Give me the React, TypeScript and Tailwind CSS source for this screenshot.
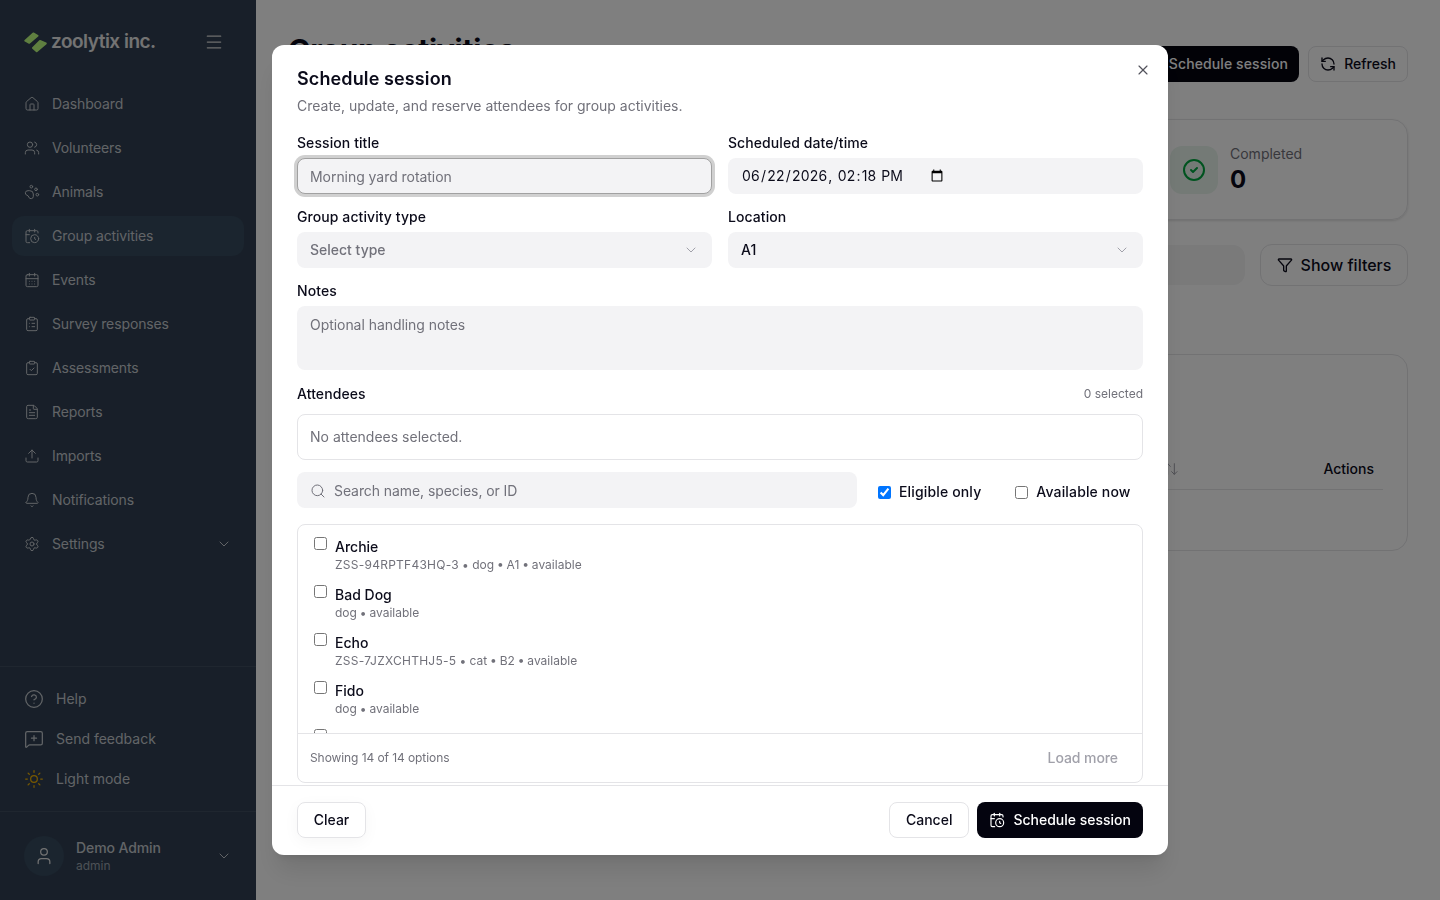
import {
  ArrowUpDown,
  Bell,
  CalendarClock,
  CalendarDays,
  ChevronDown,
  CircleCheck,
  CircleHelp,
  ClipboardCheck,
  ClipboardList,
  FileText,
  Funnel,
  House,
  Menu,
  MessageSquarePlus,
  PawPrint,
  RefreshCcw,
  Search,
  Settings,
  Sun,
  Upload,
  User,
  Users,
  X,
} from "lucide-react";

const nav = [
  { label: "Dashboard", icon: House },
  { label: "Volunteers", icon: Users },
  { label: "Animals", icon: PawPrint },
  { label: "Group activities", icon: CalendarClock, active: true },
  { label: "Events", icon: CalendarDays },
  { label: "Survey responses", icon: ClipboardList },
  { label: "Assessments", icon: ClipboardCheck },
  { label: "Reports", icon: FileText },
  { label: "Imports", icon: Upload },
  { label: "Notifications", icon: Bell },
  { label: "Settings", icon: Settings, chevron: true },
];

const animals = [
  { name: "Archie", id: "ZSS-94RPTF43HQ-3", meta: "dog • A1 • available" },
  { name: "Bad Dog", meta: "dog • available" },
  { name: "Echo", id: "ZSS-7JZXCHTHJ5-5", meta: "cat • B2 • available" },
  { name: "Fido", meta: "dog • available" },
];

function Logo() {
  return (
    <svg width="24" height="22" viewBox="0 0 24 22" className="shrink-0">
      <polygon points="1.3,9.7 9.3,2.4 13.5,4.8 5.3,11.8" fill="#bfff80" stroke="#bfff80" strokeWidth="2" strokeLinejoin="round" />
      <polygon points="9,17 16,10 21.8,12.4 12.7,20.2" fill="#bfff80" stroke="#bfff80" strokeWidth="2" strokeLinejoin="round" />
    </svg>
  );
}

function Sidebar() {
  return (
    <aside className="flex h-full w-64 shrink-0 flex-col bg-[#303f52] text-[#c4c9ce]">
      <div className="flex h-[84px] items-center justify-between pl-6 pr-[32px]">
        <div className="flex items-center gap-[3px]">
          <Logo />
          <span className="text-[19px] font-semibold tracking-[-0.5px] text-[#e6e6e6]">zoolytix inc.</span>
        </div>
        <Menu className="h-5 w-5 text-[#dcdcdc]" strokeWidth={1.5} />
      </div>
      <nav className="flex flex-1 flex-col gap-1 px-3">
        {nav.map((item) => {
          const Icon = item.icon;
          return (
            <div
              key={item.label}
              className={`flex h-10 items-center gap-3 rounded-xl px-3 text-sm tracking-[-0.12px] ${item.active ? "bg-[#364a5e]" : ""}`}
            >
              <Icon className="h-4 w-4 shrink-0" strokeWidth={1.5} />
              <span className="flex-1">{item.label}</span>
              {item.chevron && <ChevronDown className="h-4 w-4 shrink-0" strokeWidth={1.5} />}
            </div>
          );
        })}
      </nav>
      <div className="flex flex-col border-t border-[#3f4c5e] px-6 pb-3 pt-3">
        <div className="flex h-10 items-center gap-3 text-sm">
          <CircleHelp className="h-5 w-5" strokeWidth={1.5} />
          Help
        </div>
        <div className="flex h-10 items-center gap-3 text-sm">
          <MessageSquarePlus className="h-5 w-5" strokeWidth={1.5} />
          Send feedback
        </div>
        <div className="flex h-10 items-center gap-3 text-sm">
          <Sun className="h-5 w-5 text-[#f0b100]" strokeWidth={1.5} />
          Light mode
        </div>
      </div>
      <div className="flex h-[89px] items-center gap-3 border-t border-[#3f4c5e] px-6">
        <div className="flex h-10 w-10 items-center justify-center rounded-full bg-[#364a5e]">
          <User className="h-5 w-5 text-[#e6e6e6]" strokeWidth={1.5} />
        </div>
        <div className="flex-1">
          <div className="text-sm font-medium leading-5 tracking-[-0.1px]">Demo Admin</div>
          <div className="text-xs leading-4 text-[#9aa3ad]">admin</div>
        </div>
        <ChevronDown className="h-4 w-4" strokeWidth={1.5} />
      </div>
    </aside>
  );
}

function PageBehind() {
  return (
    <main className="flex-1 px-8 pt-8 text-[#0b0b1a]">
      <div className="flex items-start justify-between">
        <h1 className="text-3xl font-bold leading-9 tracking-[-0.25px]">Group activities</h1>
        <div className="mt-3.5 flex items-center gap-[9px]">
          <button className="flex h-9 items-center gap-2 rounded-lg bg-[#04040f] pl-3 pr-[11px] text-sm font-medium tracking-[0.1px] text-white">
            <CalendarClock className="h-4 w-4" />
            Schedule session
          </button>
          <button className="flex h-9 w-[100px] items-center justify-center gap-2 rounded-lg border border-[#e4e4e7] text-sm font-medium">
            <RefreshCcw className="h-4 w-4" />
            Refresh
          </button>
        </div>
      </div>
      <div className="mt-[37px] grid grid-cols-4 gap-4">
        <div className="col-span-3" />
        <div className="flex h-[101px] items-center gap-3 rounded-2xl border border-[#e4e4e7] pl-[29px] shadow-sm">
          <div className="flex h-12 w-12 items-center justify-center rounded-xl bg-[#e8f5ec]">
            <CircleCheck className="h-6 w-6 text-[#00a63e]" />
          </div>
          <div className="pb-0.5">
            <div className="mb-0.5 text-sm leading-5 text-[#71717a]">Completed</div>
            <div className="text-2xl font-bold leading-7">0</div>
          </div>
        </div>
      </div>
      <div className="mt-6 flex items-center gap-[15px]">
        <div className="h-10 flex-1 rounded-xl bg-[#f4f4f5]" />
        <button className="flex h-[42px] w-[148px] items-center justify-center gap-2 rounded-xl border border-[#e4e4e7] text-base font-medium">
          <Funnel className="h-4 w-4" />
          Show filters
        </button>
      </div>
      <div className="mt-[68px] h-[197px] rounded-2xl border border-[#e4e4e7] px-6 pt-[104px]">
        <div className="flex items-center justify-between border-b border-[#e4e4e7] pb-2.5 pl-[850px] text-sm font-medium">
          <ArrowUpDown className="h-4 w-4 text-[#a1a1aa]" strokeWidth={1.5} />
          <span className="pr-[9px]">Actions</span>
        </div>
      </div>
    </main>
  );
}

function Label({ children }: { children: React.ReactNode }) {
  return <label className="block text-sm font-medium leading-none tracking-[0.08px] text-[#0b0b1a]">{children}</label>;
}

function FakeSelect({ value, placeholder }: { value: string; placeholder?: boolean }) {
  return (
    <button className="flex h-9 w-full items-center justify-between rounded-lg bg-[#f3f3f5] pl-[13px] pr-[13px] text-sm font-medium">
      <span className={placeholder ? "text-[#71717a]" : "text-[#0b0b1a]"}>{value}</span>
      <ChevronDown className="h-4 w-4 text-[#a1a1aa]" strokeWidth={1.5} />
    </button>
  );
}

function Dialog() {
  return (
    <div className="fixed inset-0 z-50 flex items-center justify-center bg-black/50">
      <div className="relative flex h-[810px] w-[896px] flex-col overflow-hidden rounded-xl bg-white shadow-xl">
        <button className="absolute right-[17px] top-[17px] text-[#52525b]">
          <X className="h-4 w-4" strokeWidth={1.75} />
        </button>
        <div className="flex-1 overflow-hidden px-[25px] pt-5">
          <h2 className="text-lg font-semibold leading-7 tracking-[0.12px] text-[#0b0b1a]">Schedule session</h2>
          <p className="mt-[3px] text-sm leading-5 text-[#71717a]">Create, update, and reserve attendees for group activities.</p>
          <div className="mt-5 grid grid-cols-2 gap-x-4 gap-y-4">
            <div className="flex flex-col gap-2">
              <Label>Session title</Label>
              <input
                placeholder="Morning yard rotation"
                className="h-9 w-full rounded-lg border border-[#a1a1a1] bg-[#f3f3f5] px-3 text-sm tracking-[-0.05px] outline-none ring-[3px] ring-[#d0d0d0] placeholder:text-[#71717a]"
              />
            </div>
            <div className="flex flex-col gap-2">
              <Label>Scheduled date/time</Label>
              <div className="flex h-9 items-center rounded-lg bg-[#f3f3f5] pl-[13px]">
                <input
                  type="datetime-local"
                  defaultValue="2026-06-22T14:18"
                  className="w-[205px] bg-transparent text-sm tracking-[0.2px] text-[#0b0b1a] outline-none"
                />
              </div>
            </div>
            <div className="flex flex-col gap-2">
              <Label>Group activity type</Label>
              <FakeSelect value="Select type" placeholder />
            </div>
            <div className="flex flex-col gap-2">
              <Label>Location</Label>
              <FakeSelect value="A1" />
            </div>
            <div className="col-span-2 flex flex-col gap-2">
              <Label>Notes</Label>
              <textarea
                placeholder="Optional handling notes"
                className="h-16 w-full resize-none rounded-lg bg-[#f3f3f5] px-[13px] py-[9px] text-sm tracking-[-0.05px] outline-none placeholder:text-[#71717a]"
              />
            </div>
          </div>
          <div className="mt-[17px] flex items-center justify-between">
            <Label>Attendees</Label>
            <span className="text-xs leading-none text-[#71717a]">0 selected</span>
          </div>
          <div className="mt-[13px] flex h-[46px] items-center rounded-lg border border-[#e4e4e7] px-3 text-sm text-[#71717a]">
            No attendees selected.
          </div>
          <div className="mt-3 flex items-center">
            <div className="flex h-9 w-[560px] items-center gap-2 rounded-lg bg-[#f3f3f5] pl-[13px] pt-0.5 text-sm tracking-[-0.08px] text-[#71717a]">
              <Search className="h-4 w-4 shrink-0" strokeWidth={1.5} />
              Search name, species, or ID
            </div>
            <label className="ml-[21px] mt-1 flex items-center gap-2 text-sm font-medium tracking-[0.15px] text-[#0b0b1a]">
              <input type="checkbox" defaultChecked className="m-0" />
              Eligible only
            </label>
            <label className="ml-[34px] mt-1 flex items-center gap-2 text-sm font-medium tracking-[0.15px] text-[#0b0b1a]">
              <input type="checkbox" className="m-0" />
              Available now
            </label>
          </div>
          <div className="mt-4 flex h-[259px] flex-col overflow-hidden rounded-lg border border-[#e4e4e7]">
            <div className="flex-1 overflow-hidden px-4 pt-3">
              {animals.map((a) => (
                <label key={a.name} className="flex h-12 items-start gap-2">
                  <input type="checkbox" className="m-0 shrink-0" />
                  <span className="block">
                    <span className="block text-sm font-medium leading-5 text-[#0b0b1a]">{a.name}</span>
                    <span className="block text-xs leading-4 text-[#71717a] [word-spacing:-0.5px]">
                      {a.id && <span className="tracking-[0.25px]">{a.id} • </span>}
                      {a.meta}
                    </span>
                  </span>
                </label>
              ))}
              <input type="checkbox" className="m-0 block" />
            </div>
            <div className="flex h-[49px] shrink-0 items-center justify-between border-t border-[#e4e4e7] pl-3 pr-6 text-xs tracking-[-0.08px] text-[#71717a]">
              Showing 14 of 14 options
              <span className="text-sm font-medium text-[#a1a1aa]">Load more</span>
            </div>
          </div>
        </div>
        <div className="flex h-[70px] shrink-0 items-start justify-between border-t border-[#e4e4e7] px-[25px] pt-4">
          <button className="h-9 w-[69px] rounded-lg border border-[#e4e4e7] text-sm font-medium text-[#0b0b1a] shadow-[0_4px_16px_rgba(0,0,0,0.04)]">
            Clear
          </button>
          <div className="flex items-center gap-2">
            <button className="h-9 rounded-lg border border-[#e4e4e7] px-4 text-sm font-medium text-[#0b0b1a]">Cancel</button>
            <button className="flex h-9 items-center gap-2 rounded-lg bg-[#04040f] px-3 text-sm font-medium text-white">
              <CalendarClock className="h-4 w-4" strokeWidth={1.75} />
              Schedule session
            </button>
          </div>
        </div>
      </div>
    </div>
  );
}

export default function App() {
  return (
    <div className="flex h-screen w-screen overflow-hidden bg-white font-['Inter',sans-serif]">
      <Sidebar />
      <PageBehind />
      <Dialog />
    </div>
  );
}
